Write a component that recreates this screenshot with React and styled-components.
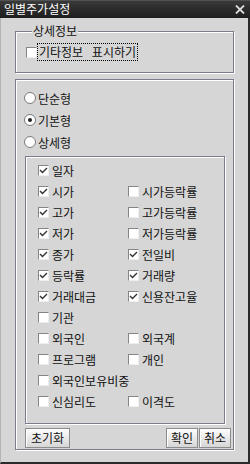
import React from "react";
import styled, { createGlobalStyle } from "styled-components";

const GlobalStyle = createGlobalStyle`
  html, body {
    margin: 0;
    padding: 0;
    background: #d6d6d6;
  }
  body {
    font-family: "Noto Sans CJK KR", "Noto Sans", sans-serif;
    font-size: 12px;
    color: #111;
  }
`;

const Window = styled.div`
  width: 250px;
  height: 464px;
  box-sizing: border-box;
  background: #d6d6d6;
  border-left: 1px solid #b4b4b4;
  border-right: 2px solid #2b2b2b;
  border-bottom: 2px solid #2b2b2b;
  display: flex;
  flex-direction: column;
`;

const TitleBar = styled.div`
  height: 18px;
  flex: none;
  margin-left: -1px;
  margin-right: -2px;
  padding: 0 5px 0 4px;
  display: flex;
  align-items: center;
  justify-content: space-between;
  background: linear-gradient(#6a6a6a 0, #3a3a3a 1px, #2e2e2e 40%, #1e1e1e 100%);
  color: #fff;
  font-size: 12px;
  line-height: 18px;
`;

const Content = styled.div`
  padding: 13px 0 0 14px;
  display: flex;
  flex-direction: column;
`;

const EtchedBox = styled.div`
  box-sizing: border-box;
  width: ${(p) => p.$w || 219}px;
  height: ${(p) => p.$h}px;
  border: 1px solid #7c7c8e;
  box-shadow: inset 1px 1px 0 #fff, 1px 1px 0 #fff;
`;

const GroupBox = styled(EtchedBox)`
  padding-left: 10px;
`;

const Legend = styled.div`
  width: fit-content;
  height: 14px;
  line-height: 14px;
  margin: -8px 0 0 6px;
  padding: 0 1px;
  background: #d6d6d6;
`;

const CheckRow = styled.div`
  display: flex;
  align-items: center;
  height: 18px;
  margin-top: ${(p) => p.$mt || 0}px;
`;

const Box = styled.span`
  width: 11px;
  height: 11px;
  flex: none;
  box-sizing: border-box;
  border: 1px solid;
  border-color: #858585 #eeeeee #eeeeee #858585;
  background: #fff;
  display: flex;
  align-items: center;
  justify-content: center;
`;

const FocusLabel = styled.span`
  border: 1px dotted #000;
  padding: 0 1px;
  height: 16px;
  line-height: 16px;
  word-spacing: 6px;
`;

const MainBox = styled(EtchedBox)`
  margin-top: 6px;
  padding-left: 9px;
  display: flex;
  flex-direction: column;
`;

const RadioList = styled.div`
  padding-top: 7px;
  display: flex;
  flex-direction: column;
`;

const RadioRow = styled.div`
  height: 22px;
  display: flex;
  align-items: center;
  gap: 2px;
  margin-left: -1px;
`;

const RadioCircle = styled.span`
  width: 12px;
  height: 12px;
  flex: none;
  box-sizing: border-box;
  border-radius: 50%;
  border: 1px solid #7a7a7a;
  background: #fff;
  display: flex;
  align-items: center;
  justify-content: center;
  &::after {
    content: "";
    width: 4px;
    height: 4px;
    border-radius: 50%;
    background: ${(p) => (p.$on ? "#222" : "transparent")};
  }
`;

const InnerBox = styled(EtchedBox)`
  margin-top: 3px;
  padding: 3px 0 0 12px;
  display: grid;
  grid-template-columns: 90px 1fr;
  grid-auto-rows: 21px;
`;

const Item = styled.div`
  display: flex;
  align-items: center;
  gap: 3px;
  white-space: nowrap;
`;

const ButtonRow = styled.div`
  margin-top: 4px;
  padding-right: 2px;
  display: flex;
  justify-content: space-between;
`;

const ButtonGroup = styled.div`
  display: flex;
  gap: 1px;
`;

const Button = styled.button`
  width: ${(p) => p.$w}px;
  height: 20px;
  padding: 0;
  box-sizing: border-box;
  font-family: inherit;
  font-size: 12px;
  line-height: 18px;
  color: #111;
  border: 1px solid #8c8c8c;
  background: linear-gradient(#fdfdfd, #d6d6d6);
  box-shadow: inset 1px 1px 0 #fff;
`;

const Check = () => (
  <svg width="9" height="7" viewBox="0 0 9 7">
    <path d="M1 3 L3.5 5.5 L8 1" fill="none" stroke="#333" strokeWidth="1.4" />
  </svg>
);

const CheckItem = ({ label, on }) => (
  <Item>
    <Box>{on && <Check />}</Box>
    {label}
  </Item>
);

const rows = [
  [["일자", true], null],
  [["시가", true], ["시가등락률", false]],
  [["고가", true], ["고가등락률", false]],
  [["저가", true], ["저가등락률", false]],
  [["종가", true], ["전일비", true]],
  [["등락률", true], ["거래량", true]],
  [["거래대금", true], ["신용잔고율", true]],
  [["기관", false], null],
  [["외국인", false], ["외국계", false]],
  [["프로그램", false], ["개인", false]],
  [["외국인보유비중", false], null],
  [["신심리도", false], ["이격도", false]],
];

const radios = [
  ["단순형", false],
  ["기본형", true],
  ["상세형", false],
];

export default function App() {
  return (
    <>
      <GlobalStyle />
      <Window>
        <TitleBar>
          <span>일별주가설정</span>
          <svg width="10" height="9" viewBox="0 0 10 9">
            <path d="M1 0.5 L9 8.5 M9 0.5 L1 8.5" stroke="#dcdcdc" strokeWidth="1.8" />
          </svg>
        </TitleBar>
        <Content>
          <GroupBox $h={42}>
            <Legend>상세정보</Legend>
            <CheckRow $mt={5}>
              <Box />
              <FocusLabel>기타정보 표시하기</FocusLabel>
            </CheckRow>
          </GroupBox>
          <MainBox $h={371}>
            <RadioList>
              {radios.map(([label, on]) => (
                <RadioRow key={label}>
                  <RadioCircle $on={on} />
                  {label}
                </RadioRow>
              ))}
            </RadioList>
            <InnerBox $w={200} $h={268}>
              {rows.map((row, i) =>
                row.map((c, j) =>
                  c ? <CheckItem key={`${i}-${j}`} label={c[0]} on={c[1]} /> : <span key={`${i}-${j}`} />
                )
              )}
            </InnerBox>
            <ButtonRow>
              <Button $w={45}>초기화</Button>
              <ButtonGroup>
                <Button $w={32}>확인</Button>
                <Button $w={32}>취소</Button>
              </ButtonGroup>
            </ButtonRow>
          </MainBox>
        </Content>
      </Window>
    </>
  );
}
